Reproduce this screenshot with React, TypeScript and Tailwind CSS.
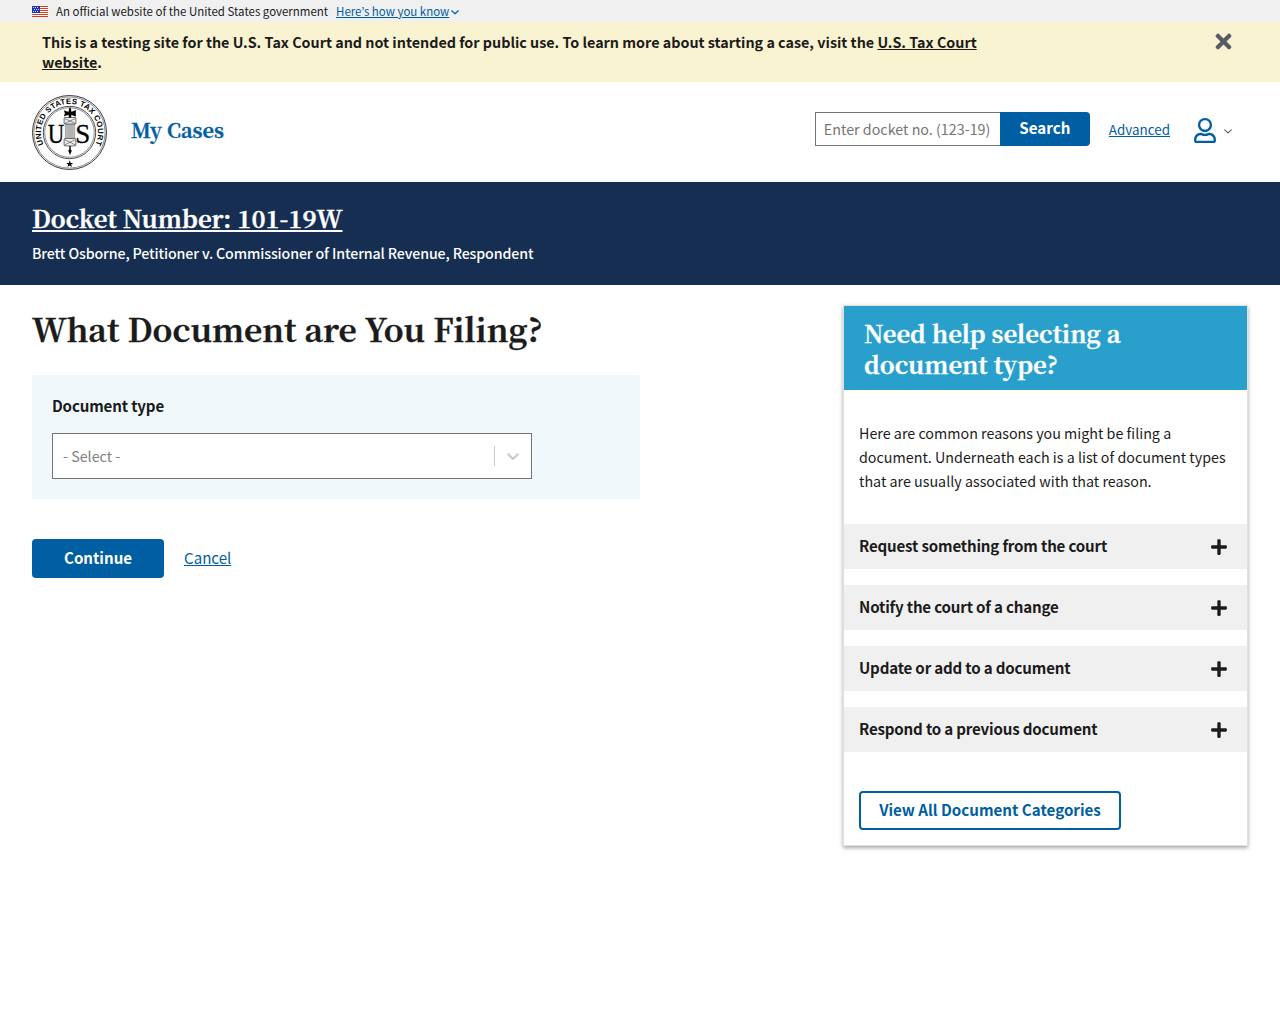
import { FaPlus, FaTimes, FaRegUser } from 'react-icons/fa'

const serif = "font-['Noto_Serif_CJK_KR','Liberation_Serif',serif] font-bold [-webkit-text-stroke:0.35px_currentColor]"

function Flag() {
  return (
    <svg width="16" height="11" viewBox="0 0 16 11" shapeRendering="crispEdges" aria-hidden="true">
      <rect width="16" height="11" fill="#fff" />
      {[0, 2, 4, 6, 8, 10].map((y) => (
        <rect key={y} y={y} width="16" height="1" fill="#db3e1f" />
      ))}
      <rect width="8" height="7" fill="#1e33b1" />
      {[1, 3, 5].map((y) =>
        [1, 3, 5].map((x) => (
          <rect key={`${x}-${y}`} x={y === 3 ? x + 1 : x} y={y} width="1" height="1" fill="#fff" opacity="0.85" />
        )),
      )}
    </svg>
  )
}

function Chevron({ width, stroke, color }: { width: number; stroke: number; color: string }) {
  return (
    <svg width={width} height={width / 2 + 1} viewBox={`0 0 ${width} ${width / 2 + 1}`} fill="none" aria-hidden="true">
      <path
        d={`M0.7 0.8 L${width / 2} ${width / 2 - 0.2} L${width - 0.7} 0.8`}
        stroke={color}
        strokeWidth={stroke}
        strokeLinecap="round"
        strokeLinejoin="round"
      />
    </svg>
  )
}

function Seal() {
  return (
    <svg width="75" height="75" viewBox="0.5 0.5 75 75" aria-label="United States Tax Court seal">
      <defs>
        <path id="seal-arc" d="M 12.1 49.8 A 28.5 28.5 0 1 1 63.9 49.8" />
      </defs>
      <g fill="none" stroke="#222">
        <circle cx="38" cy="38" r="37" strokeWidth="0.9" />
        <circle cx="38" cy="38" r="35.6" strokeWidth="0.5" />
        <circle cx="38" cy="38" r="26.2" strokeWidth="0.8" />
        <circle cx="38" cy="38" r="24.8" strokeWidth="0.5" />
      </g>
      <text className="font-['Liberation_Sans',sans-serif] font-bold" fontSize="7.8" fill="#000">
        <textPath href="#seal-arc" startOffset="0" textLength="114">
          UNITED STATES TAX COURT
        </textPath>
      </text>
      <text
        className="font-['Liberation_Serif',serif]"
        x="16.2"
        y="48"
        fontSize="28"
        fill="#000"
        stroke="#000"
        strokeWidth="0.3"
        textLength="16.5"
        lengthAdjust="spacingAndGlyphs"
      >
        U
      </text>
      <text
        className="font-['Liberation_Serif',serif]"
        x="43.8"
        y="48"
        fontSize="28"
        fill="#000"
        stroke="#000"
        strokeWidth="0.3"
        textLength="15"
        lengthAdjust="spacingAndGlyphs"
      >
        S
      </text>
      <rect x="33.2" y="23" width="10.6" height="28.5" fill="#dcdcdc" />
      <g stroke="#666" strokeWidth="0.7" fill="none">
        <path d="M34.4 29V44M36.5 29V44M38.5 29V44M40.5 29V44M42.6 29V44" />
        <rect x="32.6" y="23" width="11.8" height="6.5" rx="1" fill="#eee" stroke="#333" />
        <rect x="32.6" y="44" width="11.8" height="7.4" rx="1" fill="#eee" stroke="#333" />
        <path d="M33 24L44 29M44 24L33 29M33 45L44 50.5M44 45L33 50.5" stroke="#444" strokeWidth="0.6" />
      </g>
      <path
        d="M37.4 14.8L38.5 12.6L39.6 14.8V17H41L44.3 15.6V22.2L41 20.7H39.7V23H37.3V20.7H35.5L32.4 22L33.4 18.8L32.4 15.8L35.5 17H37.4Z"
        fill="#000"
      />
      <path d="M37.8 51.5H39.2V55L40.3 56L38.5 60.5L36.7 56L37.8 55Z" fill="#000" />
      <path
        d="M38.2 65.8L39.1 68.4H41.8L39.6 70L40.5 72.6L38.2 71L35.9 72.6L36.8 70L34.6 68.4H37.3Z"
        fill="#000"
      />
    </svg>
  )
}

const reasons = [
  'Request something from the court',
  'Notify the court of a change',
  'Update or add to a document',
  'Respond to a previous document',
]

export default function App() {
  return (
    <div className="min-h-screen bg-white font-['Noto_Sans_CJK_KR','Noto_Sans',sans-serif] text-[14.31px] text-[#1b1b1b]">
      <div className="flex h-[22px] items-center bg-[#f0f0f0] px-8 text-[11.47px] leading-[20px]">
        <Flag />
        <span className="ml-2">An official website of the United States government</span>
        <a className="ml-2 mr-0.5 text-[#005ea2] underline">Here’s how you know</a>
        <span className="mt-0.5">
          <Chevron width={8} stroke={1.2} color="#005ea2" />
        </span>
      </div>

      <div className="flex h-[60px] justify-between bg-[#faf3d1] pl-[42px] pr-[48px] pt-[10px]">
        <p className="w-[960px] text-[14.33px] font-bold leading-5">
          This is a testing site for the U.S. Tax Court and not intended for public use. To learn more about starting a
          case, visit the <a className="underline">U.S. Tax Court website</a>.
        </p>
        <FaTimes className="-mt-0.5 h-[23px] w-[17px] text-[#565c65]" />
      </div>

      <header className="flex h-[100px] items-center justify-between px-8">
        <div className="flex items-center gap-6">
          <Seal />
          <a className={`${serif} -mt-1 text-[19.96px] text-[#005ea2]`}>My Cases</a>
        </div>
        <div className="-mt-1.5 flex items-center">
          <div className="flex h-[34px] w-[185px] items-center whitespace-nowrap border border-r-0 border-[#71767a] pl-2 text-[#757575]">
            Enter docket no. (123-19)
          </div>
          <button className="h-[34px] w-[90px] rounded-r-[4px] bg-[#005ea2] pb-[4px] text-[15.15px] font-bold leading-[30px] text-white">
            Search
          </button>
          <a className="ml-[19px] text-[13.42px] text-[#005ea2] underline">Advanced</a>
          <FaRegUser className="ml-[22px] mt-[3px] h-[25px] w-[26px] text-[#005ea2]" />
          <span className="ml-1.5 mr-4 mt-1">
            <Chevron width={8} stroke={1.1} color="#565c65" />
          </span>
        </div>
      </header>

      <div className="h-[103px] bg-[#162e51] px-8 pt-[17px] text-white">
        <a className={`${serif} block text-[23.88px] leading-[38px] underline`}>Docket Number: 101-19W</a>
        <p className="mt-1 text-[14.2px] font-medium leading-6 tracking-[-0.12px]">
          Brett Osborne, Petitioner v. Commissioner of Internal Revenue, Respondent
        </p>
      </div>

      <main className="flex items-start justify-between px-8 pt-5">
        <section className="w-[608px]">
          <h1 className={`${serif} -mt-0.5 text-[31.85px] leading-[50px]`}>What Document are You Filing?</h1>
          <div className="mt-[22px] h-[124px] bg-[#f0f8fc] px-5 pt-[18px]">
            <label className="block text-[15.1px] font-bold leading-6 tracking-[-0.16px]">Document type</label>
            <div className="mt-4 flex h-[46px] w-[480px] items-center border border-[#71767a] bg-white pl-[10px]">
              <span className="text-[#808080]">- Select -</span>
              <span className="ml-auto h-5 w-px bg-[#ccc]" />
              <svg className="mx-2 fill-[#ccc]" width="20" height="20" viewBox="0 0 20 20" aria-hidden="true">
                <path d="M4.516 7.548c0.436-0.446 1.043-0.481 1.576 0l3.908 3.747 3.908-3.747c0.533-0.481 1.141-0.446 1.574 0 0.436 0.445 0.408 1.197 0 1.615-0.406 0.418-4.695 4.502-4.695 4.502-0.217 0.223-0.502 0.335-0.787 0.335s-0.57-0.112-0.789-0.335c0 0-4.287-4.084-4.695-4.502s-0.436-1.17 0-1.615z" />
              </svg>
            </div>
          </div>
          <div className="mt-10 flex items-center gap-5">
            <button className="h-[39px] w-[132px] rounded-[4px] bg-[#005ea2] pb-0.5 text-[15.1px] font-bold text-white">
              Continue
            </button>
            <a className="-mt-0.5 text-[15.1px] text-[#005ea2] underline">Cancel</a>
          </div>
        </section>

        <aside className="h-[541px] w-[405px] border border-[#dfe1e2] shadow-[0_2px_4px_rgba(0,0,0,0.35)]">
          <h3 className={`${serif} h-[84px] bg-[#28a0cb] px-5 pt-[11px] text-[23.9px] leading-[31px] text-white`}>
            Need help selecting a<br />
            document type?
          </h3>
          <p className="px-[15px] pt-[31px] leading-6">
            Here are common reasons you might be filing a document. Underneath each is a list of document types that are
            usually associated with that reason.
          </p>
          <div className="mt-[31px] flex flex-col gap-4">
            {reasons.map((r) => (
              <div key={r} className="flex h-[45px] items-center justify-between bg-[#f0f0f0] pl-[15px] pr-[19px]">
                <span className="-mt-0.5 text-[15.1px] font-bold tracking-[-0.18px]">{r}</span>
                <FaPlus className="h-[18px] w-[18px]" />
              </div>
            ))}
          </div>
          <button className="ml-[15px] mt-[39px] h-[39px] w-[262px] rounded-[4px] border-2 border-[#005ea2] pb-0.5 text-[15.15px] font-bold text-[#005ea2]">
            View All Document Categories
          </button>
        </aside>
      </main>
    </div>
  )
}
